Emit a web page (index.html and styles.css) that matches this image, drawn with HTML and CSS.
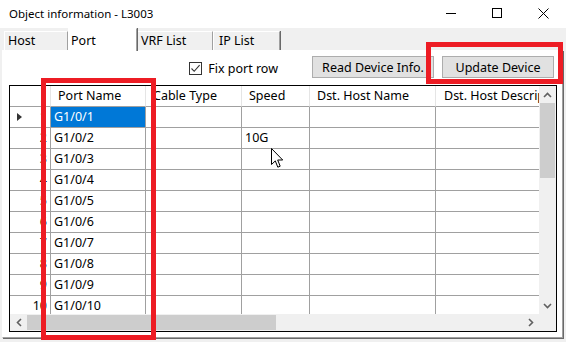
FILE: index.html
```html
<!DOCTYPE html>
<html>
    <head>
        <title>Object information - L3003</title>
        <meta charset="UTF-8">
        <meta name="viewport" content="width=device-width, initial-scale=1.0">
        <link rel="stylesheet" href="styles.css">
    </head>
    <body>
        <div class="window">
            <!-- Title bar -->
            <div class="titlebar">
                <span class="title">Object information - L3003</span>
                <div class="controls">
                    <span class="ctrl">
                        <svg width="10" height="10" viewBox="0 0 10 10"><path d="M0 5.5H10" stroke="#000" stroke-width="1"/></svg>
                    </span>
                    <span class="ctrl">
                        <svg width="10" height="10" viewBox="0 0 10 10"><rect x="0.5" y="0.5" width="9" height="9" fill="none" stroke="#000" stroke-width="1"/></svg>
                    </span>
                    <span class="ctrl">
                        <svg width="11" height="11" viewBox="0 0 11 11"><path d="M0.5 0.5L10.5 10.5M10.5 0.5L0.5 10.5" stroke="#000" stroke-width="1"/></svg>
                    </span>
                </div>
            </div>

            <!-- Tabs -->
            <div class="tabs">
                <div class="tab tab-host">Host</div>
                <div class="tab tab-port active">Port</div>
                <div class="tab tab-vrf">VRF List</div>
                <div class="tab tab-ip">IP List</div>
            </div>

            <!-- Tab page -->
            <div class="page">
                <div class="toolbar">
                    <label class="check">
                        <span class="box">
                            <svg width="11" height="11" viewBox="0 0 11 11"><path d="M1.5 5.5L4.2 8.3L9.6 2.2" fill="none" stroke="#333" stroke-width="1.1"/></svg>
                        </span>
                        Fix port row
                    </label>
                    <button class="btn btn-read">Read Device Info.</button>
                    <button class="btn btn-update">Update Device</button>
                </div>

                <div class="grid">
                    <div class="data">
                        <div class="row head">
                            <div class="cell c0"></div>
                            <div class="cell c1">Port Name</div>
                            <div class="cell c2">Cable Type</div>
                            <div class="cell c3">Speed</div>
                            <div class="cell c4">Dst. Host Name</div>
                            <div class="cell c5">Dst. Host Description</div>
                        </div>
                        <div class="row">
                            <div class="cell c0"><span class="current"></span><span class="num">1</span></div>
                            <div class="cell c1 selected">G1/0/1</div>
                            <div class="cell c2"></div>
                            <div class="cell c3"></div>
                            <div class="cell c4"></div>
                            <div class="cell c5"></div>
                        </div>
                        <div class="row">
                            <div class="cell c0"><span class="num">2</span></div>
                            <div class="cell c1">G1/0/2</div>
                            <div class="cell c2"></div>
                            <div class="cell c3">10G</div>
                            <div class="cell c4"></div>
                            <div class="cell c5"></div>
                        </div>
                        <div class="row">
                            <div class="cell c0"><span class="num">3</span></div>
                            <div class="cell c1">G1/0/3</div>
                            <div class="cell c2"></div>
                            <div class="cell c3"></div>
                            <div class="cell c4"></div>
                            <div class="cell c5"></div>
                        </div>
                        <div class="row">
                            <div class="cell c0"><span class="num">4</span></div>
                            <div class="cell c1">G1/0/4</div>
                            <div class="cell c2"></div>
                            <div class="cell c3"></div>
                            <div class="cell c4"></div>
                            <div class="cell c5"></div>
                        </div>
                        <div class="row">
                            <div class="cell c0"><span class="num">5</span></div>
                            <div class="cell c1">G1/0/5</div>
                            <div class="cell c2"></div>
                            <div class="cell c3"></div>
                            <div class="cell c4"></div>
                            <div class="cell c5"></div>
                        </div>
                        <div class="row">
                            <div class="cell c0"><span class="num">6</span></div>
                            <div class="cell c1">G1/0/6</div>
                            <div class="cell c2"></div>
                            <div class="cell c3"></div>
                            <div class="cell c4"></div>
                            <div class="cell c5"></div>
                        </div>
                        <div class="row">
                            <div class="cell c0"><span class="num">7</span></div>
                            <div class="cell c1">G1/0/7</div>
                            <div class="cell c2"></div>
                            <div class="cell c3"></div>
                            <div class="cell c4"></div>
                            <div class="cell c5"></div>
                        </div>
                        <div class="row">
                            <div class="cell c0"><span class="num">8</span></div>
                            <div class="cell c1">G1/0/8</div>
                            <div class="cell c2"></div>
                            <div class="cell c3"></div>
                            <div class="cell c4"></div>
                            <div class="cell c5"></div>
                        </div>
                        <div class="row">
                            <div class="cell c0"><span class="num">9</span></div>
                            <div class="cell c1">G1/0/9</div>
                            <div class="cell c2"></div>
                            <div class="cell c3"></div>
                            <div class="cell c4"></div>
                            <div class="cell c5"></div>
                        </div>
                        <div class="row">
                            <div class="cell c0"><span class="num">10</span></div>
                            <div class="cell c1">G1/0/10</div>
                            <div class="cell c2"></div>
                            <div class="cell c3"></div>
                            <div class="cell c4"></div>
                            <div class="cell c5"></div>
                        </div>
                    </div>

                    <!-- vertical scrollbar -->
                    <div class="vscroll">
                        <span class="arrow">
                            <svg width="9" height="6" viewBox="0 0 9 6"><path d="M1 5L4.5 1.5L8 5" fill="none" stroke="#606060" stroke-width="1.6"/></svg>
                        </span>
                        <span class="vthumb"></span>
                        <span class="vtrack"></span>
                        <span class="arrow">
                            <svg width="9" height="6" viewBox="0 0 9 6"><path d="M1 1L4.5 4.5L8 1" fill="none" stroke="#606060" stroke-width="1.6"/></svg>
                        </span>
                    </div>

                    <!-- horizontal scrollbar -->
                    <div class="hscroll">
                        <span class="arrow">
                            <svg width="6" height="9" viewBox="0 0 6 9"><path d="M5 1L1.5 4.5L5 8" fill="none" stroke="#606060" stroke-width="1.6"/></svg>
                        </span>
                        <span class="hthumb"></span>
                        <span class="htrack"></span>
                        <span class="arrow">
                            <svg width="6" height="9" viewBox="0 0 6 9"><path d="M1 1L4.5 4.5L1 8" fill="none" stroke="#606060" stroke-width="1.6"/></svg>
                        </span>
                    </div>
                    <div class="corner"></div>
                </div>
            </div>

            <!-- Highlight boxes drawn over the window -->
            <div class="mark mark-update"></div>
            <div class="mark mark-port"></div>

            <!-- Mouse pointer -->
            <svg class="pointer" width="13" height="21" viewBox="0 0 13 21">
                <path d="M0.5 0.5V16.5L4.3 12.9L6.8 19.2L9.2 18.2L6.7 12H11.7Z" fill="#fff" stroke="#000" stroke-width="1" stroke-linejoin="miter"/>
            </svg>
        </div>
    </body>
</html>
```

FILE: styles.css
```css
body {
    margin: 0;
    font-family: "Noto Sans", Arial, sans-serif;
    font-size: 12.5px;
    color: #000;
}

.window {
    position: relative;
    width: 566px;
    height: 342px;
    background-color: #f0f0f0;
    overflow: hidden;
}

/* title bar */
.titlebar {
    display: flex;
    align-items: center;
    justify-content: space-between;
    height: 28px;
    background-color: #fff;
}
.title {
    padding-left: 9px;
    margin-top: -2px;
    font-size: 11.5px;
}
.controls {
    display: flex;
    margin-top: -2px;
}
.ctrl {
    display: flex;
    align-items: center;
    justify-content: center;
    width: 46px;
    height: 26px;
}

/* tabs */
.tabs {
    display: flex;
    align-items: flex-end;
    height: 22px;
    padding-left: 4px;
}
.tab {
    box-sizing: border-box;
    height: 19px;
    padding-left: 3px;
    line-height: 17px;
    background-color: #f0f0f0;
    border-top: 1px solid #fff;
    border-left: 1px solid #fff;
    border-right: 1px solid #a0a0a0;
    box-shadow: 1px 0 0 #696969;
}
.tab-host { width: 64px; }
.tab-port { width: 69px; }
.tab-vrf { width: 76px; }
.tab-ip { width: 67px; padding-left: 5px; }

.tab.active {
    height: 23px;
    margin-bottom: -1px;
    padding-top: 3px;
    padding-left: 2px;
    background-color: #fff;
    position: relative;
    z-index: 1;
}

/* tab page */
.page {
    box-sizing: border-box;
    width: 561px;
    height: 288px;
    margin-left: 2px;
    padding: 6px 3px 0 6px;
    background-color: #fff;
    border-left: 1px solid #fff;
    border-right: 1px solid #a0a0a0;
    border-bottom: 1px solid #a0a0a0;
    box-shadow: 1px 1px 0 #696969;
}

.toolbar {
    display: flex;
    align-items: center;
    justify-content: flex-end;
    height: 22px;
    margin-right: 5px;
}
.check {
    display: flex;
    align-items: center;
    gap: 6px;
    margin-top: 3px;
    margin-right: 34px;
}
.box {
    box-sizing: border-box;
    display: flex;
    align-items: center;
    justify-content: center;
    width: 13px;
    height: 13px;
    border: 1px solid #333;
    background-color: #fff;
}
.btn {
    box-sizing: border-box;
    height: 22px;
    padding: 0;
    font-family: inherit;
    font-size: 12.5px;
    color: #000;
    background-color: #e1e1e1;
    border: 1px solid #adadad;
}
.btn-read { width: 122px; margin-right: 8px; }
.btn-update { width: 112px; }

/* data grid */
.grid {
    display: grid;
    grid-template-columns: 529px 17px;
    grid-template-rows: 228px 17px;
    width: 548px;
    height: 247px;
    box-sizing: border-box;
    margin-top: 7px;
    border: 1px solid #000;
    background-color: #fff;
}
.data {
    overflow: hidden;
}
.row {
    display: flex;
}
.cell {
    box-sizing: border-box;
    flex: none;
    height: 21px;
    padding-left: 3px;
    line-height: 20px;
    white-space: nowrap;
    overflow: hidden;
    border-right: 1px solid #a0a0a0;
    border-bottom: 1px solid #a0a0a0;
}
.c0 { width: 41px; display: flex; align-items: center; padding-left: 7px; padding-right: 3px; }
.c1 { width: 95px; }
.c2 { width: 96px; }
.c3 { width: 68px; }
.c4 { width: 126px; }
.c5 { width: 140px; }

.head .cell {
    padding-left: 7px;
    border-right-color: #e5e5e5;
}
.head .c5 { padding-left: 8px; }

.num {
    margin-left: auto;
}
.current {
    width: 0;
    height: 0;
    border-top: 4px solid transparent;
    border-bottom: 4px solid transparent;
    border-left: 5px solid #333;
}

.selected {
    background-color: #0078d7;
    color: #fff;
}

/* scrollbars */
.vscroll {
    display: flex;
    flex-direction: column;
    background-color: #f0f0f0;
}
.vscroll .arrow {
    display: flex;
    align-items: center;
    justify-content: center;
    height: 17px;
}
.vthumb {
    height: 75px;
    margin: 0 1px;
    background-color: #cdcdcd;
}
.vtrack { flex: 1; }

.hscroll {
    display: flex;
    background-color: #f0f0f0;
}
.hscroll .arrow {
    display: flex;
    align-items: center;
    justify-content: center;
    width: 17px;
}
.hthumb {
    width: 249px;
    margin: 1px 0;
    background-color: #cdcdcd;
}
.htrack { flex: 1; }
.corner {
    background-color: #f0f0f0;
}

/* red highlight frames */
.mark {
    position: absolute;
    box-sizing: border-box;
    border: 5px solid #ed1c24;
}
.mark-update {
    left: 426px;
    top: 42px;
    width: 137px;
    height: 42px;
}
.mark-port {
    left: 41px;
    top: 78px;
    width: 115px;
    height: 262px;
}

.pointer {
    position: absolute;
    left: 271px;
    top: 148px;
}
```
